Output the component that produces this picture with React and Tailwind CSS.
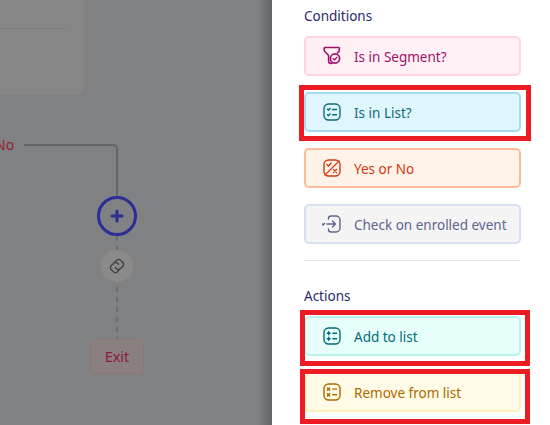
const Box = ({ children }) => (
  <svg width="20" height="20" viewBox="0 0 20 20" fill="none" stroke="currentColor" strokeWidth="1.4" strokeLinecap="round" strokeLinejoin="round">
    <rect x="2" y="2" width="16" height="16" rx="4.5" />
    {children}
  </svg>
);

const SegmentIcon = () => (
  <svg width="20" height="20" viewBox="0 0 20 20" fill="none" stroke="currentColor" strokeWidth="1.6" strokeLinecap="round" strokeLinejoin="round">
    <path d="M3 1.5h13.5a.8.8 0 0 1 .8 1v1.8a2 2 0 0 1-.6 1.4l-1.2 1.1" />
    <path d="M3 1.5a.9.9 0 0 0-.8 1.2v1.4a2 2 0 0 0 .6 1.4l3.2 3.2a2 2 0 0 1 .6 1.4v5.2a2.2 2.2 0 0 0 2.2 2.1h1.2" />
    <circle cx="13" cy="12.5" r="4.6" />
    <path d="M11 12.6l1.5 1.4 2.4-2.8" strokeWidth="1.3" />
  </svg>
);
const ListCheckIcon = () => (
  <Box>
    <path d="M5.5 7.2l1 1 1.6-1.9M5.5 12.7l1 1 1.6-1.9M10.5 7.5h4M10.5 12.8h4" />
  </Box>
);
const YesNoIcon = () => (
  <Box>
    <path d="M3 17L17 3" strokeWidth="1.1" />
    <path d="M5 6.5l1.5 1.5 2.6-3M11.5 11.5l3 3M14.5 11.5l-3 3" />
  </Box>
);
const EventIcon = () => (
  <svg width="20" height="20" viewBox="0 0 20 20" fill="none" stroke="currentColor" strokeWidth="1.4" strokeLinecap="round" strokeLinejoin="round">
    <path d="M6.5 5V4.5a2.5 2.5 0 0 1 2.5-2.5h5a4 4 0 0 1 4 4v8a4 4 0 0 1-4 4H9a2.5 2.5 0 0 1-2.5-2.5V15" />
    <path d="M5 10h8.5M10.5 7l3 3-3 3" />
    <path d="M.3 10l.9.9 1.2-1.4" />
  </svg>
);
const AddIcon = () => (
  <Box>
    <path d="M5.2 7.3h3M6.7 5.8v3M5.2 12.7h3M6.7 11.2v3M10.8 7.3h3.8M10.8 12.7h3.8" />
  </Box>
);
const RemoveIcon = () => (
  <Box>
    <path d="M5.4 5.9l2.3 2.3M7.7 5.9L5.4 8.2M5.4 11.6l2.3 2.3M7.7 11.6l-2.3 2.3M10.8 7.1h3.8M10.8 12.8h3.8" />
  </Box>
);

const Card = ({ icon, label, cls, mark }) => (
  <div className="relative">
    <div className={`flex h-10 items-center gap-[12px] rounded-[5px] border-2 pl-[16px] text-[13.5px] ${cls}`}>
      <span className="flex w-[20px] shrink-0 justify-center">{icon}</span>
      <span className="relative top-px">{label}</span>
    </div>
    {mark}
  </div>
);

const Mark = ({ cls }) => <div className={`pointer-events-none absolute border-[5px] border-[#ed1c24] ${cls}`} />;

export default function App() {
  return (
    <div
      className="flex h-[425px] w-[550px] overflow-hidden bg-white"
      style={{ fontFamily: '"Noto Sans", sans-serif' }}
    >
      <div className="relative h-full w-[272px] shrink-0 overflow-hidden bg-[#808183]">
        <div className="absolute left-0 top-0 h-[95px] w-[84px] rounded-br-[8px] bg-[#868686]">
          <div className="absolute left-0 top-[28px] h-px w-[67px] bg-[#7d7c83]" />
        </div>
        <span className="absolute left-[-5px] top-[135px] text-[14px] leading-[19px] text-[#98202f]">No</span>
        <div className="absolute left-[24px] top-[144px] h-[54px] w-[94px] rounded-tr-[5px] border-r-2 border-t-2 border-[#656668]" />
        <div className="absolute left-[97px] top-[196px] flex h-10 w-10 items-center justify-center rounded-full border-[3px] border-[#2d2d9a] bg-[#808183]">
          <svg width="16" height="16" viewBox="0 0 16 16" fill="none" stroke="#2d2d9a" strokeWidth="3" strokeLinecap="round">
            <path d="M8 3v10M3 8h10" />
          </svg>
        </div>
        <svg className="absolute left-[116px] top-[236px]" width="2" height="14" fill="none" stroke="#55565a">
          <path d="M1 0v14" strokeDasharray="4.5 5.5" />
        </svg>
        <div className="absolute left-[101px] top-[250px] flex h-8 w-8 items-center justify-center rounded-full bg-[#8a8a8a]">
          <svg width="18" height="18" viewBox="0 0 18 18" fill="none" stroke="#3d3e44" strokeWidth="1.3" strokeLinecap="round">
            <path d="M6.7 5.2L8.8 3.1a2.6 2.6 0 0 1 3.7 0l2.4 2.4a2.6 2.6 0 0 1 0 3.7l-2.6 2.6a2.6 2.6 0 0 1-3.7 0L7.4 10.6" />
            <path d="M11.3 12.8L9.2 14.9a2.6 2.6 0 0 1-3.7 0l-2.4-2.4a2.6 2.6 0 0 1 0-3.7l2.6-2.6a2.6 2.6 0 0 1 3.7 0l1.2 1.2" />
          </svg>
        </div>
        <svg className="absolute left-[116px] top-[282px]" width="2" height="57" fill="none" stroke="#55565a">
          <path d="M1 0v57" strokeDasharray="5 5" transform="translate(0 5)" />
        </svg>
        <div className="absolute left-[90px] top-[339px] flex h-[35px] w-[54px] items-center justify-center rounded-[4px] border border-[#8f7576] bg-[#8a8080] text-[14.5px] text-[#8c1a3e]">
          Exit
        </div>
        <div className="absolute right-0 top-0 h-full w-[14px] bg-gradient-to-r from-transparent to-[#636466]" />
      </div>

      <div className="flex-1 pl-[32px] pr-[29px]">
        <h3 className="mt-[7px] text-[13.5px] leading-[18px] text-[#272b6b]">Conditions</h3>
        <div className="mt-[11px] flex flex-col gap-4">
          <Card icon={<SegmentIcon />} label="Is in Segment?" cls="border-[#ffd6e7] bg-[#fff0f6] text-[#9e1068]" />
          <Card
            icon={<ListCheckIcon />}
            label="Is in List?"
            cls="border-[#a3dcf2] bg-[#e0f6fe] text-[#0f6b78]"
            mark={<Mark cls="-bottom-[9px] -left-[5px] -right-[10px] -top-[7px]" />}
          />
          <Card icon={<YesNoIcon />} label="Yes or No" cls="border-[#ffbb96] bg-[#fff2e8] text-[#d4380d]" />
          <Card icon={<EventIcon />} label="Check on enrolled event" cls="border-[#d6e0ef] bg-[#f4f4f5] text-[#5f6590]" />
        </div>
        <div className="mt-4 h-px bg-[#e5e7eb]" />
        <h3 className="mt-[26px] text-[13.5px] leading-[18px] text-[#272b6b]">Actions</h3>
        <div className="mt-[11px] flex flex-col gap-4">
          <Card
            icon={<AddIcon />}
            label="Add to list"
            cls="border-[#b5f5ec] bg-[#e6fffb] text-[#006d75]"
            mark={<Mark cls="-bottom-[10px] -left-[4px] -right-[9px] -top-[6px]" />}
          />
          <Card
            icon={<RemoveIcon />}
            label="Remove from list"
            cls="border-[#fff1b8] bg-[#fffbe6] text-[#ad6800]"
            mark={<Mark cls="-bottom-[12px] -left-[4px] -right-[9px] -top-[3px]" />}
          />
        </div>
      </div>
    </div>
  );
}
